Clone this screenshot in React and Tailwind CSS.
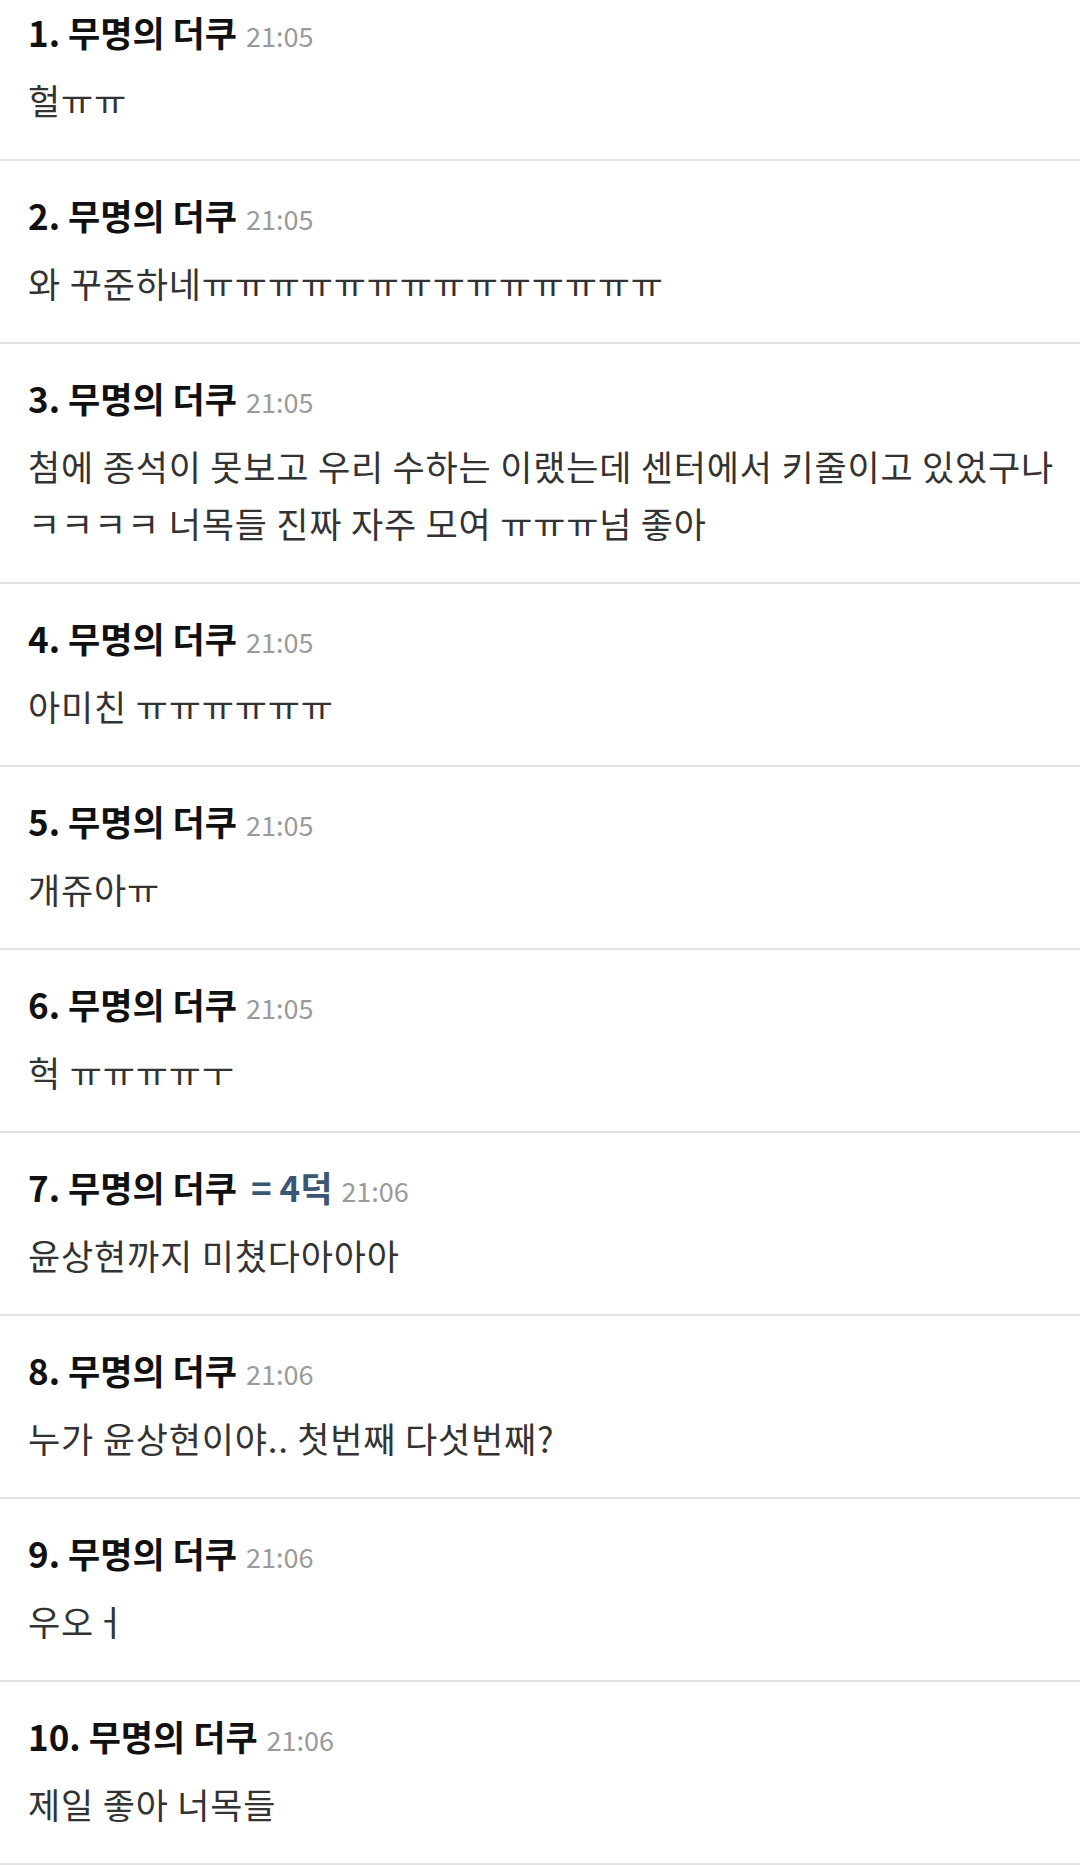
const comments = [
  { no: 1, time: "21:05", text: "헐ㅠㅠ" },
  { no: 2, time: "21:05", text: "와 꾸준하네ㅠㅠㅠㅠㅠㅠㅠㅠㅠㅠㅠㅠㅠㅠ" },
  {
    no: 3,
    time: "21:05",
    text: "첨에 종석이 못보고 우리 수하는 이랬는데 센터에서 키줄이고 있었구나 ㅋㅋㅋㅋ 너목들 진짜 자주 모여 ㅠㅠㅠ넘 좋아",
  },
  { no: 4, time: "21:05", text: "아미친 ㅠㅠㅠㅠㅠㅠ" },
  { no: 5, time: "21:05", text: "개쥬아ㅠ" },
  { no: 6, time: "21:05", text: "헉 ㅠㅠㅠㅠㅜ" },
  { no: 7, time: "21:06", text: "윤상현까지 미쳤다아아아", dup: "= 4덕" },
  { no: 8, time: "21:06", text: "누가 윤상현이야.. 첫번째 다섯번째?" },
  { no: 9, time: "21:06", text: "우오ㅓ" },
  { no: 10, time: "21:06", text: "제일 좋아 너목들" },
]

function Comment({ c, first }) {
  return (
    <div
      className={`pl-7 pr-2 pb-[31px] border-b-2 border-[#e2e2e2] ${
        first ? "pt-2" : "pt-[30px]"
      }`}
    >
      <div className="flex items-baseline h-[48px] leading-[48px]">
        <span className="text-[35px] font-bold text-[#111]">
          {c.no}. 무명의 더쿠
        </span>
        {c.dup && (
          <span className="ml-[14px] text-[35px] font-bold text-[#3b5574]">{c.dup}</span>
        )}
        <span className="ml-[9px] text-[27px] text-[#9a9a9a]">{c.time}</span>
      </div>
      <p className="mt-[15px] text-[35px] tracking-[0.8px] leading-[57px] text-[#333] break-keep">
        {c.text}
      </p>
    </div>
  )
}

export default function App() {
  return (
    <div
      className="w-[1080px] min-h-[1865px] bg-white"
      style={{ fontFamily: '"Noto Sans CJK KR", "Noto Sans", sans-serif' }}
    >
      {comments.map((c, i) => (
        <Comment key={c.no} c={c} first={i === 0} />
      ))}
    </div>
  )
}
